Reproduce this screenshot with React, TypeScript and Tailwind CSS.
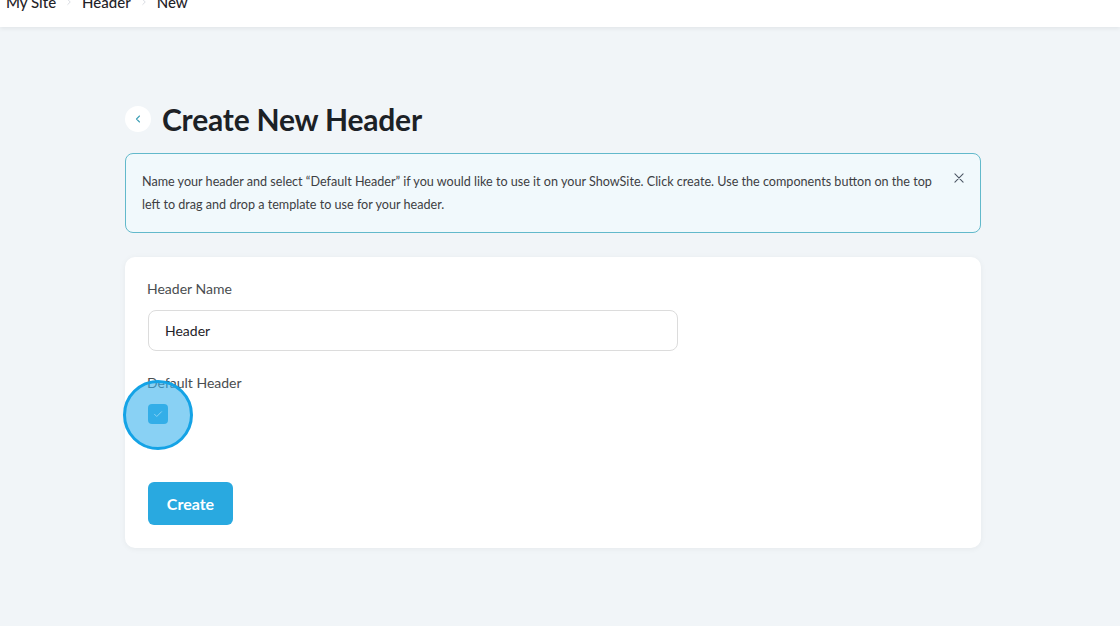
import React, { useState } from "react";

const font = { fontFamily: "Lato, 'Noto Sans', sans-serif" };

const Chevron: React.FC<{ className?: string }> = ({ className }) => (
  <svg viewBox="0 0 24 24" className={className} fill="none" stroke="currentColor" strokeWidth={2} strokeLinecap="round" strokeLinejoin="round">
    <path d="M9 6l6 6-6 6" />
  </svg>
);

export default function App() {
  const [name, setName] = useState("Header");
  const [isDefault, setIsDefault] = useState(true);
  const [showInfo, setShowInfo] = useState(true);

  return (
    <div className="min-h-[626px] bg-[#f1f5f8] text-[#1f2328]" style={font}>
      {/* top bar with breadcrumb */}
      <div className="h-[27px] bg-white shadow-[0_2px_4px_rgba(0,0,0,0.06)] overflow-hidden">
        <div className="flex items-center gap-[8px] pl-[6px] -mt-[8px] text-[15px] leading-[20px] font-medium text-[#1f2328]">
          <span>My Site</span>
          <Chevron className="w-[10px] h-[10px] text-gray-300" />
          <span>Header</span>
          <Chevron className="w-[10px] h-[10px] text-gray-300" />
          <span>New</span>
        </div>
      </div>

      <div className="ml-[125px] w-[856px] pt-[77px]">
        {/* title */}
        <div className="flex items-center gap-[11px] h-[30px]">
          <button className="w-[26px] h-[26px] rounded-full bg-white flex items-center justify-center text-[#3f9fb6]">
            <svg viewBox="0 0 24 24" className="w-[12px] h-[12px]" fill="none" stroke="currentColor" strokeWidth={2.2} strokeLinecap="round" strokeLinejoin="round">
              <path d="M15 6l-6 6 6 6" />
            </svg>
          </button>
          <h1 className="text-[30px] font-bold leading-none tracking-[-0.2px] text-[#1c2126]">Create New Header</h1>
        </div>

        {/* info alert */}
        {showInfo && (
          <div className="mt-[19px] h-[80px] rounded-[8px] border border-[#62b9cb] bg-[#f1f9fc] flex items-start pl-[16px] pr-[14px] pt-[16px]">
            <p className="flex-1 text-[12.6px] leading-[23px] text-[#3d4043]">
              Name your header and select “Default Header” if you would like to use it on your ShowSite. Click create. Use the components button on the top left to drag and drop a template to use for your header.
            </p>
            <button onClick={() => setShowInfo(false)} className="ml-[10px] mt-[1px] text-[#4b5563]">
              <svg viewBox="0 0 24 24" className="w-[14px] h-[14px]" fill="none" stroke="currentColor" strokeWidth={1.8} strokeLinecap="round">
                <path d="M5 5l14 14M19 5L5 19" />
              </svg>
            </button>
          </div>
        )}

        {/* form card */}
        <div className="mt-[24px] h-[291px] rounded-[10px] bg-white shadow-[0_1px_6px_rgba(0,0,0,0.05)] pl-[22px] pt-[23px]">
          <label className="block text-[14px] leading-[18px] text-[#4a4d50]">Header Name</label>
          <input
            value={name}
            onChange={(e) => setName(e.target.value)}
            className="mt-[12px] ml-[1px] w-[530px] h-[41px] rounded-[8px] border border-[#dcdcdc] px-[16px] text-[14px] text-[#1f2328] outline-none"
          />

          <label className="block mt-[23px] text-[14px] leading-[18px] text-[#4a4d50]">Default Header</label>
          <div className="relative mt-[12px] ml-[1px] w-[20px] h-[20px]">
            <button
              onClick={() => setIsDefault(!isDefault)}
              className={`w-[20px] h-[20px] rounded-[4px] flex items-center justify-center ${isDefault ? "bg-[#29a9e0]" : "bg-white border border-gray-300"}`}
            >
              {isDefault && (
                <svg viewBox="0 0 24 24" className="w-[12px] h-[12px]" fill="none" stroke="white" strokeWidth={2} strokeLinecap="round" strokeLinejoin="round">
                  <path d="M5 12.5l4.5 4.5L19 7.5" />
                </svg>
              )}
            </button>
            {/* click highlight */}
            <div className="absolute left-[-25px] top-[-24px] w-[70px] h-[70px] rounded-full border-[3px] border-[#14a3e6] bg-[#3bb2ec]/60 pointer-events-none" />
          </div>

          <button className="mt-[58px] ml-[1px] w-[85px] h-[43px] rounded-[6px] bg-[#29a9e0] text-white text-[16px] font-bold">
            Create
          </button>
        </div>
      </div>
    </div>
  );
}
